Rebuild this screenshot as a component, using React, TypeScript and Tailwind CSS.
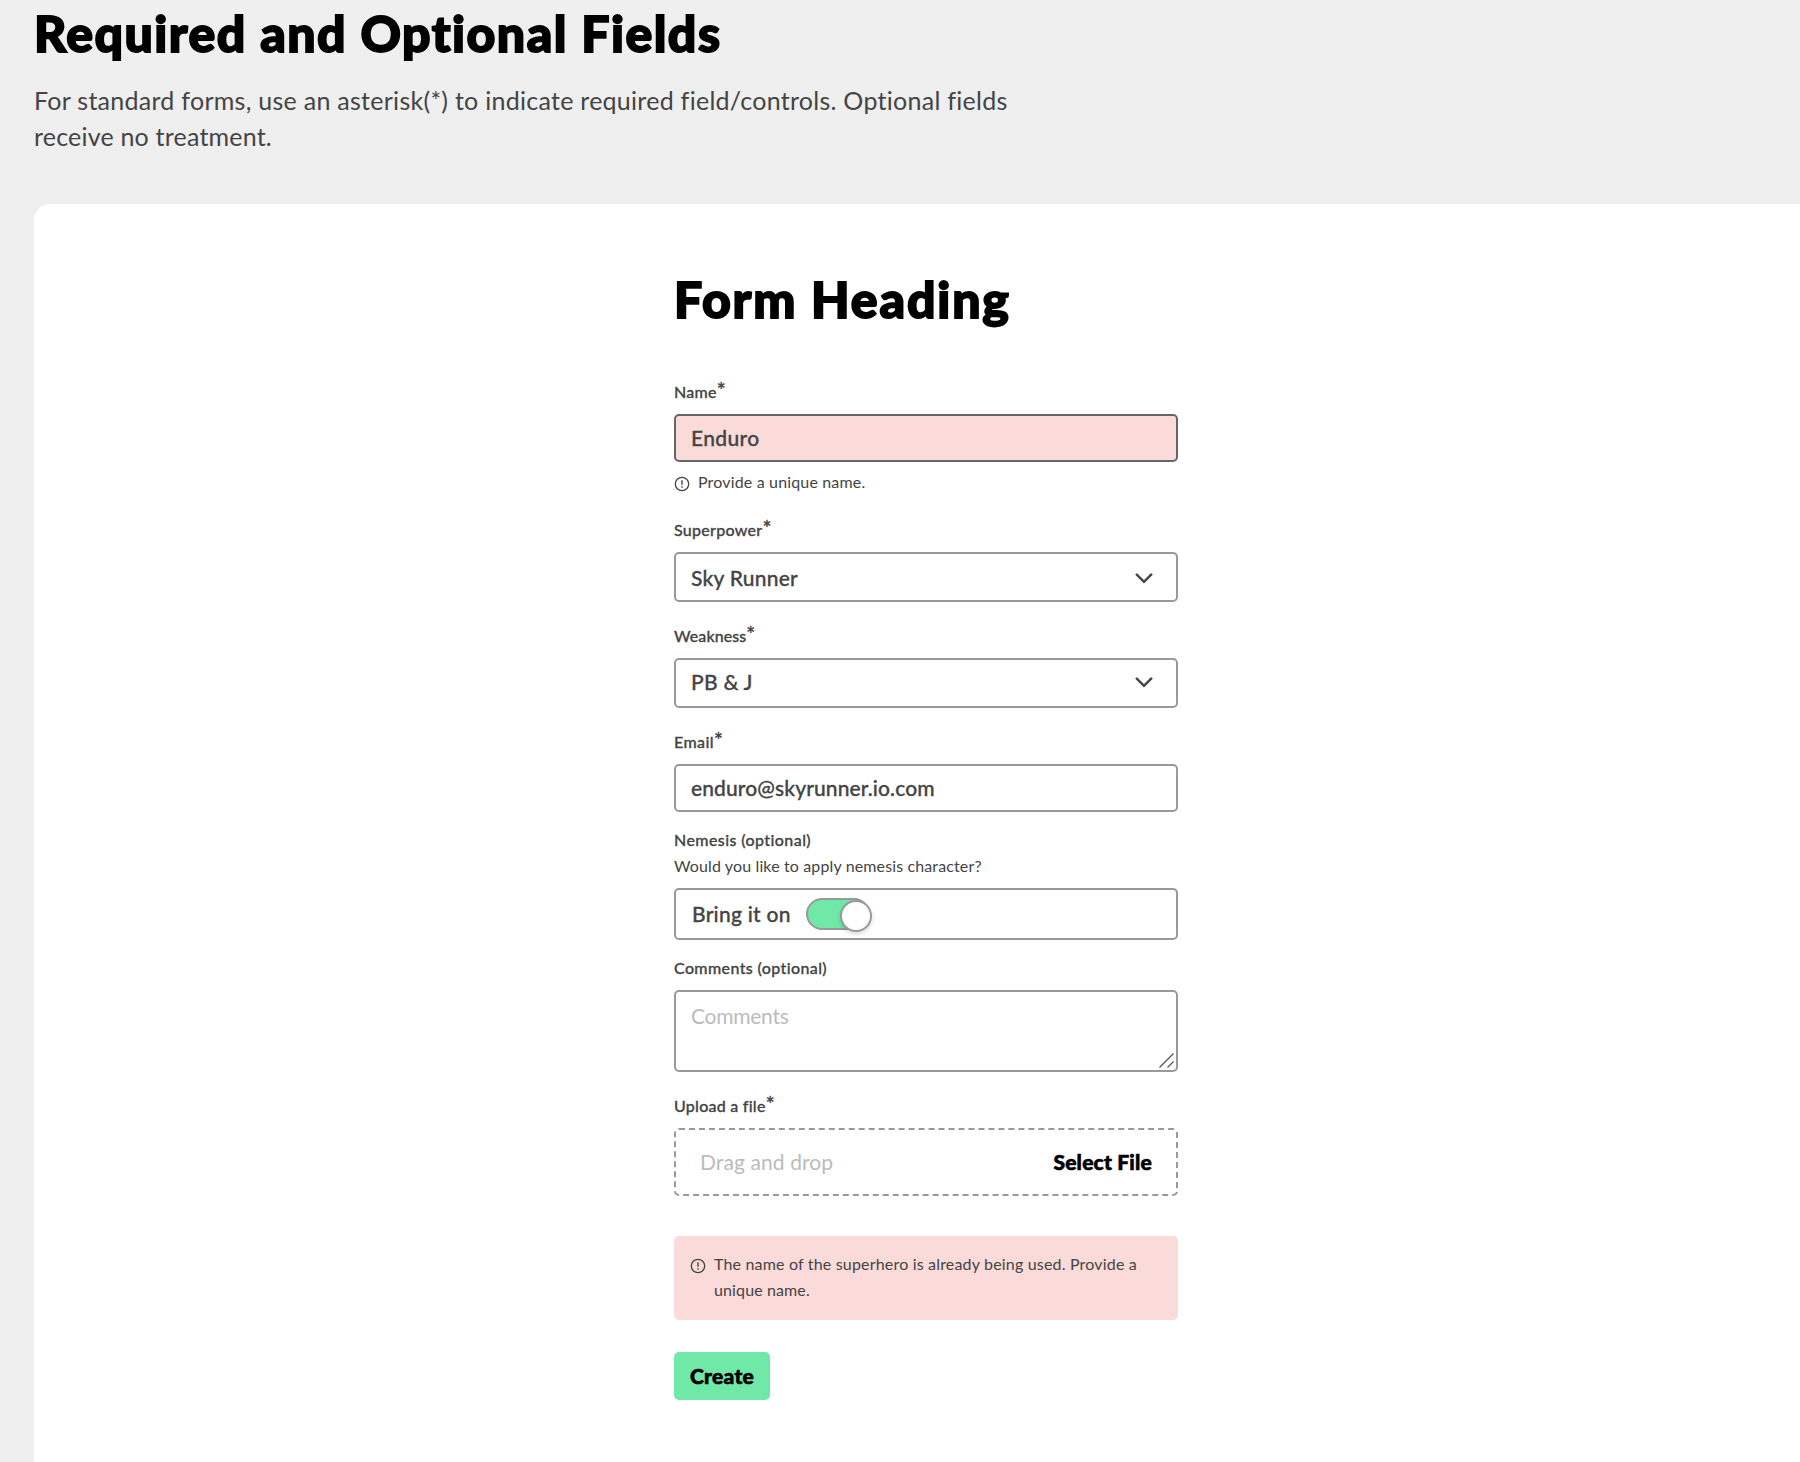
import type { ReactNode } from "react";

function AlertIcon({ className = "" }: { className?: string }) {
  return (
    <svg className={`size-4 shrink-0 ${className}`} viewBox="0 0 16 16" fill="none" stroke="#444444" strokeWidth="1.3">
      <circle cx="8" cy="8" r="6.7" />
      <path d="M8 4.2v4.6M8 10.2v1.5" strokeWidth="1.4" />
    </svg>
  );
}

function Chevron() {
  return (
    <svg className="size-6" viewBox="0 0 24 24" fill="none" stroke="#444444" strokeWidth="2.5" strokeLinecap="square">
      <path d="M5 8.8l7 7 7-7" />
    </svg>
  );
}

function Label({ children, required = false, className = "" }: { children: ReactNode; required?: boolean; className?: string }) {
  return (
    <div className={`flex h-6 text-base leading-6 font-medium [-webkit-text-stroke:0.3px_#444444] ${className}`}>
      {children}
      {required && <span className="relative -top-0.5 text-[21px] leading-6 tracking-normal">*</span>}
    </div>
  );
}

function Select({ value, className = "" }: { value: string; className?: string }) {
  return (
    <div
      className={`mt-2.5 flex h-[50px] items-center justify-between rounded-[5px] border-2 border-[#999999] pr-5 pl-[15px] text-[21px] font-medium ${className}`}
    >
      <span className="[-webkit-text-stroke:0.3px_#444444]">{value}</span>
      <Chevron />
    </div>
  );
}

export default function App() {
  return (
    <div className="h-[1462px] overflow-hidden bg-[#efefef] pl-[34px] font-['Lato','Noto_Sans',sans-serif] text-[#444444] [font-variant-ligatures:none]">
      <h1 className="pt-[3px] text-[50px] leading-[60px] font-black tracking-[1.47px] text-black [-webkit-text-stroke:1.8px_black]">
        Required and Optional Fields
      </h1>
      <p className="mt-[19px] text-[25px] leading-9 tracking-[0.27px]">
        For standard forms, use an asterisk(*) to indicate required field/controls. Optional fields
        <br />
        <span className="tracking-[0.2px]">receive no treatment.</span>
      </p>

      <main className="mt-[50px] h-[1300px] rounded-tl-2xl bg-white pt-[65px] pl-[640px]">
        <form className="flex w-[504px] flex-col">
          <h2 className="text-[50px] leading-[60px] font-black tracking-[1.85px] text-black [-webkit-text-stroke:1.8px_black]">
            Form Heading
          </h2>

          <Label required className="mt-[51px] tracking-[0.25px]">Name</Label>
          <div className="mt-2.5 flex h-12 items-center rounded-[5px] border-2 border-[#666666] bg-[#fadbd9] pl-[15px] text-[21px] font-medium tracking-[0.35px] [-webkit-text-stroke:0.3px_#444444]">
            Enduro
          </div>
          <div className="mt-2 flex h-6 gap-2 text-base leading-6 tracking-[0.16px]">
            <AlertIcon className="mt-1.5" />
            Provide a unique name.
          </div>

          <Label required className="mt-6 tracking-[0.28px]">Superpower</Label>
          <Select value="Sky Runner" className="pt-0.5 tracking-[0.24px]" />

          <Label required className="mt-[22px] tracking-[0.07px]">Weakness</Label>
          <Select value="PB & J" className="pb-0.5 tracking-[0.25px]" />

          <Label required className="mt-[22px] tracking-[0.4px]">Email</Label>
          <div className="mt-2.5 flex h-12 items-center rounded-[5px] border-2 border-[#999999] pl-[15px] text-[21px] font-medium tracking-[0.11px] [-webkit-text-stroke:0.3px_#444444]">
            enduro@skyrunner.io.com
          </div>

          <Label className="mt-4 tracking-[0.41px]">Nemesis (optional)</Label>
          <p className="mt-0.5 text-base leading-6 tracking-[0.13px]">Would you like to apply nemesis character?</p>
          <div className="mt-2.5 flex h-[52px] items-center rounded-[5px] border-2 border-[#999999] pl-4 text-[21px] font-medium tracking-[0.25px]">
            <span className="w-[114px] [-webkit-text-stroke:0.3px_#444444]">Bring it on</span>
            <span className="relative h-8 w-16 rounded-full border-2 border-[#999999] bg-[#6fe8a8]">
              <span className="absolute top-0 left-8 size-8 rounded-full border-2 border-[#999999] bg-white shadow-[0_2px_4px_rgba(0,0,0,0.15)]" />
            </span>
          </div>

          <Label className="mt-4 tracking-[0.38px]">Comments (optional)</Label>
          <div className="mt-2.5 flex h-[82px] justify-between rounded-[5px] border-2 border-[#999999] pl-[15px] text-[21px] leading-6 text-[#bbbbbb]">
            <span className="pt-3 tracking-[-0.25px]">Comments</span>
            <svg className="mr-0.5 mb-0.5 size-4 self-end" viewBox="0 0 16 16" fill="none" stroke="#555555" strokeWidth="1.3">
              <path d="M1.5 15.5L15.5 1.5M9.5 15.5L15.5 9.5" />
            </svg>
          </div>

          <Label required className="mt-[22px] tracking-[0.25px]">Upload a file</Label>
          <div className="mt-2.5 flex h-[68px] items-center justify-between rounded-[5px] border-2 border-dashed border-[#999999] pr-6 pl-6 text-[21px]">
            <span className="tracking-[0.1px] text-[#bbbbbb]">Drag and drop</span>
            <span className="font-black tracking-[0.2px] text-black [-webkit-text-stroke:0.6px_black]">Select File</span>
          </div>

          <div className="mt-10 flex h-[84px] gap-2 rounded-[5px] bg-[#fadbd9] pt-[15px] pl-4 text-base leading-[26px] tracking-[0.18px]">
            <AlertIcon className="mt-[7px]" />
            <p>
              The name of the superhero is already being used. Provide a
              <br />
              <span className="tracking-[0.12px]">unique name.</span>
            </p>
          </div>

          <button
            type="button"
            className="mt-8 h-12 w-24 rounded-[5px] bg-[#6fe8a8] text-[21px] font-black tracking-[0.3px] text-black [-webkit-text-stroke:0.6px_black]"
          >
            Create
          </button>
        </form>
      </main>
    </div>
  );
}
